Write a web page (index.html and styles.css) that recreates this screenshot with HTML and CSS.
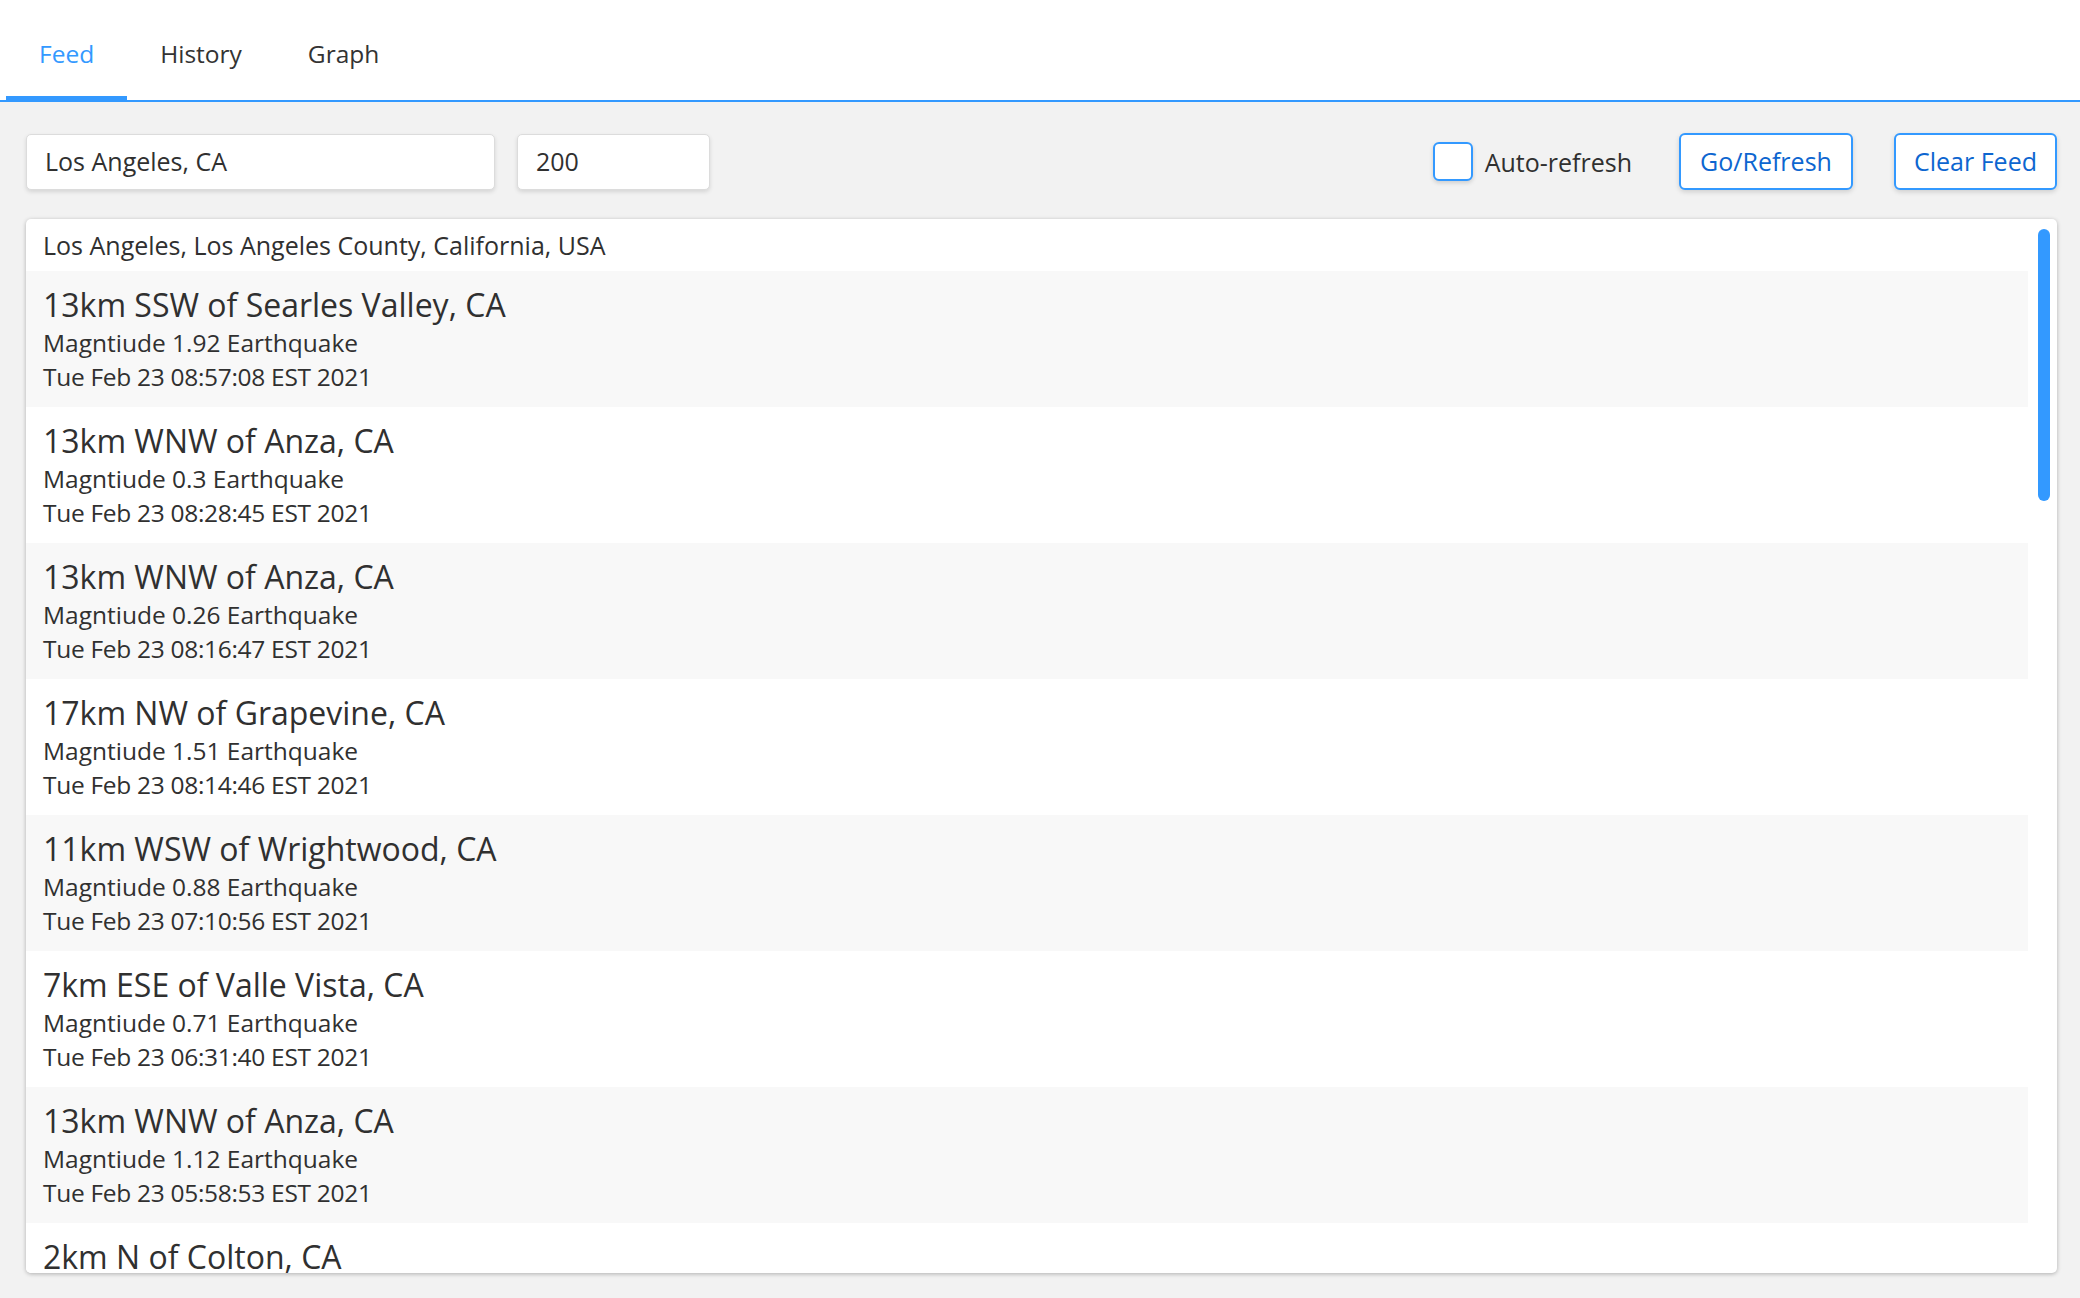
FILE: index.html
```html
<!DOCTYPE html>
<html lang="en">
<head>
<meta charset="utf-8">
<title>Earthquake Feed</title>
<link rel="stylesheet" href="styles.css">
</head>
<body>
<div class="app">
  <nav class="tabbar">
    <div class="tab active">Feed</div>
    <div class="tab">History</div>
    <div class="tab">Graph</div>
  </nav>
  <div class="controls">
    <input class="field field-location" type="text" value="Los Angeles, CA">
    <input class="field field-radius" type="text" value="200">
    <div class="spacer"></div>
    <label class="check">
      <span class="check-box"></span>
      <span class="check-label">Auto-refresh</span>
    </label>
    <button class="btn btn-go">Go/Refresh</button>
    <button class="btn btn-clear">Clear Feed</button>
  </div>
  <div class="panel">
    <div class="feed-scroll">
      <div class="feed-header">Los Angeles, Los Angeles County, California, USA</div>
      <ul class="feed">
        <li class="quake"><div class="q-title">13km SSW of Searles Valley, CA</div><div class="q-line">Magntiude 1.92 Earthquake</div><div class="q-line q-time">Tue Feb 23 08:57:08 EST 2021</div></li>
        <li class="quake"><div class="q-title">13km WNW of Anza, CA</div><div class="q-line">Magntiude 0.3 Earthquake</div><div class="q-line q-time">Tue Feb 23 08:28:45 EST 2021</div></li>
        <li class="quake"><div class="q-title">13km WNW of Anza, CA</div><div class="q-line">Magntiude 0.26 Earthquake</div><div class="q-line q-time">Tue Feb 23 08:16:47 EST 2021</div></li>
        <li class="quake"><div class="q-title">17km NW of Grapevine, CA</div><div class="q-line">Magntiude 1.51 Earthquake</div><div class="q-line q-time">Tue Feb 23 08:14:46 EST 2021</div></li>
        <li class="quake"><div class="q-title">11km WSW of Wrightwood, CA</div><div class="q-line">Magntiude 0.88 Earthquake</div><div class="q-line q-time">Tue Feb 23 07:10:56 EST 2021</div></li>
        <li class="quake"><div class="q-title">7km ESE of Valle Vista, CA</div><div class="q-line">Magntiude 0.71 Earthquake</div><div class="q-line q-time">Tue Feb 23 06:31:40 EST 2021</div></li>
        <li class="quake"><div class="q-title">13km WNW of Anza, CA</div><div class="q-line">Magntiude 1.12 Earthquake</div><div class="q-line q-time">Tue Feb 23 05:58:53 EST 2021</div></li>
        <li class="quake"><div class="q-title">2km N of Colton, CA</div></li>
      </ul>
    </div>
    <div class="scrollbar"><div class="scrollbar-thumb"></div></div>
  </div>
</div>
</body>
</html>
```

FILE: styles.css
```css
* { box-sizing: border-box; }

html, body {
  margin: 0;
  padding: 0;
  height: 100%;
}

body {
  font-family: "Open Sans", "Noto Sans", sans-serif;
  font-size: 25px;
  color: #303030;
  background: #f2f2f2;
}

.app {
  height: 100vh;
  display: flex;
  flex-direction: column;
}

/* Tabs */
.tabbar {
  display: flex;
  height: 102px;
  padding-left: 6px;
  background: #ffffff;
  border-bottom: 2px solid #3399ff;
  flex: none;
}

.tab {
  height: 100px;
  padding: 37px 33px 0;
  line-height: 34px;
  font-size: 24.5px;
  color: #333333;
}

.tab.active {
  color: #3399ff;
  border-bottom: 4px solid #3399ff;
}

/* Controls */
.controls {
  flex: none;
  display: flex;
  align-items: center;
  padding: 31px 23px 29px 26px;
}

.field {
  height: 56px;
  border: 1px solid #dcdcdc;
  border-radius: 5px;
  background: #ffffff;
  box-shadow: 0 2px 4px rgba(0, 0, 0, 0.12);
  font-family: inherit;
  font-size: 25px;
  color: #303030;
  padding: 0 18px 2px;
  outline: none;
}

.field-location { width: 469px; }
.field-radius { width: 193px; margin-left: 22px; }

.spacer { flex: 1; }

.check {
  display: flex;
  align-items: center;
}

.check-box {
  width: 40px;
  height: 39px;
  border: 2px solid #3399ff;
  border-radius: 6px;
  background: #ffffff;
  box-shadow: 0 2px 4px rgba(0, 0, 0, 0.15);
}

.check-label {
  margin-left: 12px;
  font-size: 25px;
  line-height: 34px;
}

.btn {
  height: 57px;
  border: 2px solid #3399ff;
  border-radius: 6px;
  background: #ffffff;
  box-shadow: 0 2px 5px rgba(0, 0, 0, 0.15);
  color: #0d66d0;
  font-family: inherit;
  font-size: 25px;
  padding: 0 18px 2px;
}

.btn-go { margin-left: 47px; width: 174px; }
.btn-clear { margin-left: 41px; width: 163px; }

/* Panel */
.panel {
  flex: 1;
  min-height: 0;
  margin: 0 23px 25px 26px;
  background: #ffffff;
  border-radius: 5px;
  box-shadow: 0 1px 4px rgba(0, 0, 0, 0.28);
  display: flex;
  overflow: hidden;
}

.feed-scroll {
  flex: 1;
  min-width: 0;
  overflow: hidden;
}

.scrollbar {
  flex: none;
  width: 29px;
  padding: 10px 7px 0 10px;
}

.scrollbar-thumb {
  height: 272px;
  background: #3399ff;
  border-radius: 6px;
}

.feed-header {
  padding: 9px 17px 9px;
  line-height: 34px;
  font-size: 25px;
}

.feed {
  list-style: none;
  margin: 0;
  padding: 0;
}

.quake {
  padding: 15px 17px 13px;
  background: #ffffff;
}

.quake:nth-child(odd) {
  background: #f8f8f8;
}

.q-title {
  font-size: 32px;
  line-height: 38px;
  margin-bottom: 2px;
}

.q-line {
  font-size: 24.5px;
  line-height: 34px;
}

.q-time {
  letter-spacing: -0.3px;
}
```
